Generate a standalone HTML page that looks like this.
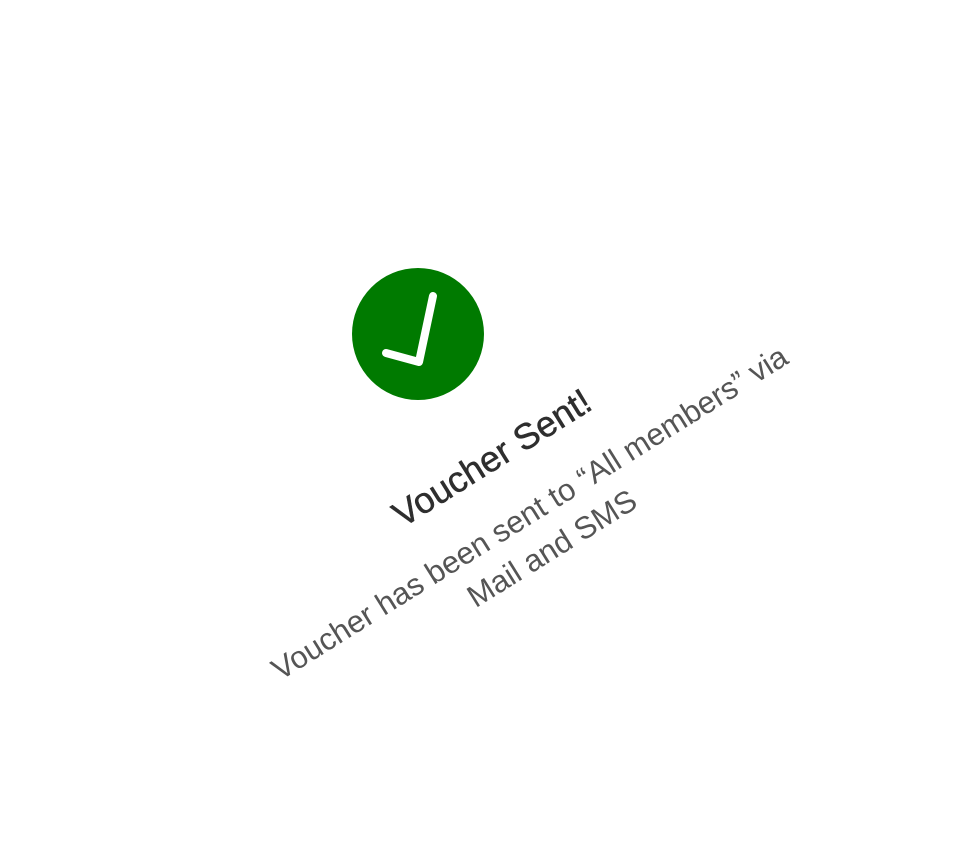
<!DOCTYPE html>
<html><head><meta charset="utf-8"><style>
html,body{margin:0;padding:0;background:#fff;width:954px;height:854px;overflow:hidden;position:relative;font-family:"Liberation Sans",sans-serif}
.t{position:absolute;transform:translate(-50%,-50%) rotate(-32deg);white-space:nowrap;text-align:center}
</style></head><body>
<svg width="954" height="854" style="position:absolute;left:0;top:0">
<circle cx="418" cy="334" r="66" fill="#007a00"/>
<polyline points="386,353 419,362 433,296" fill="none" stroke="#fff" stroke-width="8" stroke-linecap="round" stroke-linejoin="round"/>
</svg>
<div class="t" style="left:492px;top:458px;font-size:36px;color:#2e2e2e;-webkit-text-stroke:0.5px #2e2e2e;">Voucher Sent!</div>
<div class="t" style="left:541px;top:531px;font-size:31px;line-height:42px;color:#555;">Voucher has been sent to “All members” via<br>Mail and SMS</div>
</body></html>
